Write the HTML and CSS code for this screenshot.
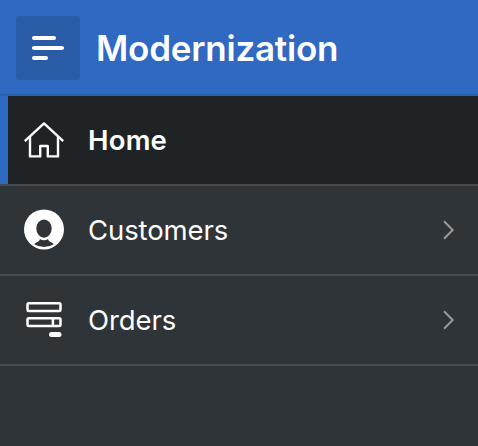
FILE: index.html
```html
<!DOCTYPE html>
<html lang="en">
<head>
<meta charset="utf-8">
<title>Modernization</title>
<link rel="stylesheet" href="styles.css">
</head>
<body>
<header class="header">
  <button class="menu-button" aria-label="Main Navigation">
    <svg width="32" height="24" viewBox="0 0 32 24"><path d="M2 2H22M2 12H30M2 22H14" stroke="#fff" stroke-width="4" stroke-linecap="round"/></svg>
  </button>
  <h1 class="title">Modernization</h1>
</header>
<nav class="nav">
  <a class="item item-current">
    <svg class="icon" viewBox="0 0 40 40"><g fill="none" stroke="#fff" stroke-width="2.4" stroke-linejoin="round"><path d="M.8 21.2 20 3.4 39.2 21.2"/><path d="M6 17V36.4H16.2V26H23.8V36.4H34V17"/></g></svg>
    <span class="label label-home">Home</span>
  </a>
  <a class="item">
    <svg class="icon" viewBox="0 0 40 40"><circle cx="20" cy="19.4" r="20" fill="#fff"/><ellipse cx="20" cy="18.6" rx="7.7" ry="9.2" fill="#2f3439"/><path d="M10.2 34.2C11.5 32.2 15.7 32 15.9 29Q20 31.5 24.1 29C24.3 32 28.5 32.2 29.8 34.2Q20 39.8 10.2 34.2Z" fill="#2f3439"/></svg>
    <span class="label label-customers">Customers</span>
    <svg class="chevron" viewBox="0 0 12 20"><path d="M1 1.2 9.7 10 1 18.8" fill="none" stroke="#989a9b" stroke-width="2"/></svg>
  </a>
  <a class="item">
    <svg class="icon" viewBox="0 0 40 40"><g fill="none" stroke="#fff" stroke-width="2.5"><rect x="3.5" y="3.2" width="33" height="7.7" rx="1.3"/><rect x="3.5" y="18.2" width="33" height="7.7" rx="1.3"/><path d="M28.9 18V26"/></g><rect x="25" y="32" width="12.5" height="5" rx="2.5" fill="#fff"/></svg>
    <span class="label label-orders">Orders</span>
    <svg class="chevron" viewBox="0 0 12 20"><path d="M1 1.2 9.7 10 1 18.8" fill="none" stroke="#989a9b" stroke-width="2"/></svg>
  </a>
</nav>
</body>
</html>
```
FILE: styles.css
```css
* { box-sizing: border-box; }
body {
  margin: 0;
  min-height: 446px;
  background: #2f3439;
  color: #fff;
  font-family: Inter, "Liberation Sans", sans-serif;
}
.header {
  display: flex;
  align-items: center;
  height: 96px;
  padding: 2px 16px 0;
  background: #2f69c2;
  border-bottom: 2px solid #2a5eae;
}
.menu-button {
  display: flex;
  align-items: center;
  justify-content: center;
  width: 64px;
  height: 64px;
  padding: 0;
  border: 0;
  border-radius: 4px;
  background: #295ba6;
}
.title {
  margin: 0 0 0 16px;
  font-size: 35px;
  line-height: 48px;
  font-weight: 600;
  letter-spacing: -0.22px;
}
.item {
  display: flex;
  align-items: center;
  height: 90px;
  padding: 0 23px 0 24px;
  border-bottom: 2px solid #474b4d;
}
.item-current {
  background: linear-gradient(90deg, #2f69c2 8px, #1f2325 8px) padding-box;
}
.icon { width: 40px; height: 40px; flex: none; overflow: visible; }
.label {
  flex: 1;
  margin-left: 24px;
  font-size: 27.5px;
  line-height: 40px;
}
.label-home { font-weight: 600; letter-spacing: 0.2px; }
.label-customers { letter-spacing: -0.1px; }
.label-orders { letter-spacing: -0.1px; }
.chevron { width: 12px; height: 20px; }
```
